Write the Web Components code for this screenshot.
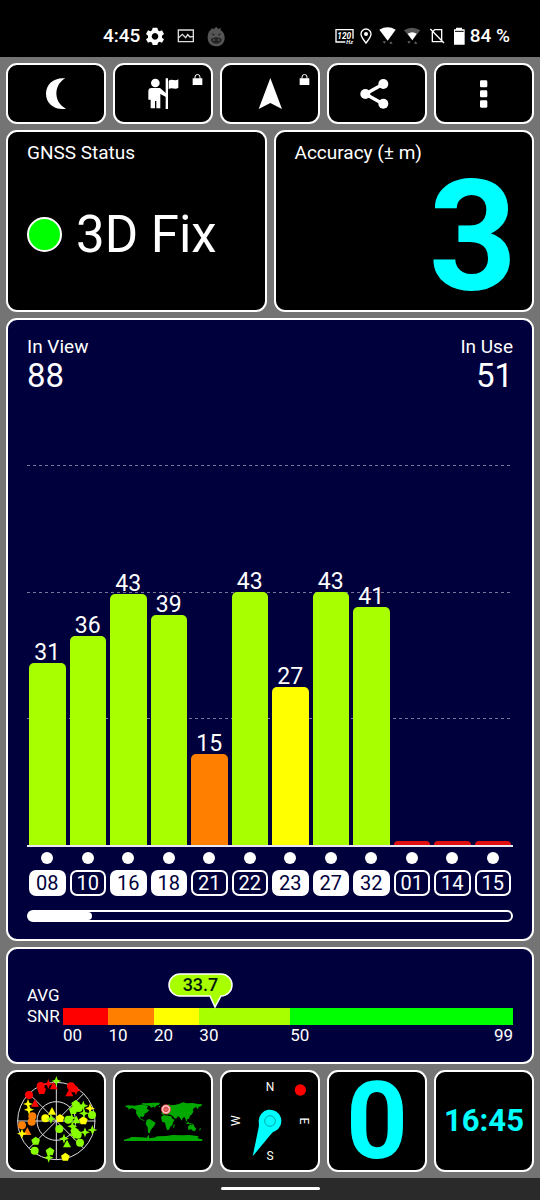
<!DOCTYPE html>
<html lang="en">
<head>
<meta charset="utf-8">
<meta name="viewport" content="width=device-width, initial-scale=1">
<title>GNSS Status</title>
<style>
html, body { margin: 0; }
body {
  --line: #fff; --panel: #00003c; --lime: #a8ff00; --orange: #ff8000; --cyan: #0ff;
  background: #747474; color: #fff; font-family: Roboto, "Liberation Sans", sans-serif;
}
</style>
</head>
<body>
<gps-app></gps-app>
<script>
const define = (name, html) => customElements.define(name, class extends HTMLElement {
  constructor() {
    super();
    this.attachShadow({ mode: 'open' });
  }
  connectedCallback() {
    this.shadowRoot.innerHTML = typeof html === 'function' ? html(this) : html;
  }
});

define('status-bar', `
<style>
:host { display: flex; justify-content: space-between; align-items: center; box-sizing: border-box;
  height: 57px; padding: 15px 30px 0 103px; background: #000; font-size: 19px; font-weight: 500; line-height: 24px; }
div { display: flex; align-items: center; }
.left { gap: 6px; }
.right { gap: 4px; }
svg { display: block; height: 24px; fill: #fff; }
</style>
<div class="left">
  <span>4:45</span>
  <svg width="18" viewBox="171 26 54 72"><path fill-rule="evenodd" d="M191 37h14l2 8 5 3 7-3 6 11-6 5v6l6 5-6 10-7-3-5 3-2 7h-14l-2-7-5-3-7 3-6-10 6-5v-6l-6-5 6-11 7 3 5-3zM198 53a10 10 0 1 0 .1 0z"/></svg>
  <svg width="31" viewBox="243 26 93 72"><path d="M268 44h45v35h-45zM268 68l12-11 10 10 6-9 7 7 10 -2" fill="none" stroke="#ddd" stroke-width="4"/></svg>
  <svg width="18" viewBox="354 26 54 72"><path d="M356 66c0-12 4-20 10-23l3-5 5 4 8-8 5 7 8-3v7c8 4 12 12 12 22 0 16-10 26-26 26s-25-11-25-27z" fill="#555"/><path d="M368 54l9 3-3 5zM396 54l-9 3 3 5zM366 70q16-9 32 0 0 14-16 15-16-1-16-15z" fill="#222"/><circle cx="375" cy="74" r="3" fill="#555"/><circle cx="389" cy="74" r="3" fill="#555"/></svg>
</div>
<div class="right">
  <svg width="20" viewBox="42 26 60 72"><path d="M73 80H45V43h51v27" fill="none" stroke="#fff" stroke-width="4"/><text x="49" y="70" font-size="25" font-style="italic" font-weight="700">120</text><text x="76" y="87" font-size="17" font-style="italic" font-weight="700">Hz</text></svg>
  <svg width="14" viewBox="114 26 42 72"><path d="M135 83c-8-11-15-18-15-27a15 15 0 0 1 30 0c0 9-7 16-15 27z" fill="none" stroke="#fff" stroke-width="4"/><circle cx="135" cy="56" r="6"/></svg>
  <svg width="21" viewBox="168 26 63 72"><path d="M175 43q25-14 49 0l-24 33z"/><path d="M185 78h10l-5 7zM205 85h10l-5-7z" fill="#666"/></svg>
  <svg width="20" viewBox="243 26 60 72"><path d="M249 45q24-16 49 0l-24 30z" fill="#555"/><path d="M260 55q14-9 27 0l-13 20z"/><path d="M259 78h10l-5 7zM279 85h10l-5-7z" fill="#666"/></svg>
  <svg width="23" viewBox="315 26 69 72"><path d="M341 43h21v36h-28V51zM328 41l41 42" fill="none" stroke="#fff" stroke-width="4"/></svg>
  <svg width="13" viewBox="396 26 39 72"><path d="M405 37h18v5h8v46h-32V42h6z"/><path d="M402 48h26" stroke="#000" stroke-width="3"/></svg>
  <span>84 %</span>
</div>`);

/* Tool buttons: each glyph is drawn in a 288 x 171 box that fills the button. */
const lock = x => `<path d="M${x - 15} 70h29v20h-29z"/><path d="M${x - 8} 71v-5a7 7 0 0 1 15 0v5" fill="none" stroke="#fff" stroke-width="3"/>`;
const tools = {
  night: ['24', '<path d="M196 70c-32-4-58 16-58 46s26 50 60 45c-38-18-38-72-2-91z"/>'],
  position: ['345', `<circle cx="466" cy="84" r="13"/><path d="M453 99h27l18 16v11l-17-9v43h-12v-22h-4v22h-13v-26h-7v-27q0-7 8-8z"/><path d="M497 70h7v92h-7zM506 77c10-8 18 4 29-4v25c-11 8-18-3-29 4z"/>${lock(593)}`],
  navigate: ['666', `<path d="M811 69l35 93-35-18-35 18z"/>${lock(914)}`],
  share: ['177', '<path d="M340 87l-54 30 54 30" fill="none" stroke="#fff" stroke-width="10"/><circle cx="340" cy="87" r="15"/><circle cx="286" cy="117" r="15"/><circle cx="340" cy="146" r="15"/>'],
  menu: ['498', '<rect x="630" y="76" width="22" height="21" rx="4"/><rect x="630" y="106" width="22" height="21" rx="4"/><rect x="630" y="136" width="22" height="22" rx="4"/>']
};
define('tool-button', el => `
<style>
:host { display: block; }
button { display: block; box-sizing: border-box; width: 100%; height: 61px; padding: 0; border: 2px solid var(--line);
  border-radius: 11px; background: #000; overflow: hidden; }
svg { display: block; width: 100%; height: 57px; fill: #fff; }
</style>
<button type="button" aria-label="${el.getAttribute('label')}"><svg viewBox="${tools[el.getAttribute('icon')][0]} 30 288 171">${tools[el.getAttribute('icon')][1]}</svg></button>`);

define('info-card', `
<style>
:host { display: flex; flex-direction: column; box-sizing: border-box; height: 182px; padding: 9px 19px 6px;
  border: 2px solid var(--line); border-radius: 11px; background: #000; }
h2 { margin: 0; font-size: 19px; line-height: 24px; font-weight: 400; }
div { flex: 1; display: flex; align-items: center; }
</style>
<h2><slot name="title"></slot></h2>
<div><slot></slot></div>`);

define('fix-status', `
<style>
:host { display: flex; align-items: center; gap: 14px; font-size: 51px; line-height: 60px; white-space: nowrap; }
i { box-sizing: border-box; width: 35px; height: 35px; border: 2px solid #fff; border-radius: 50%; background: #0f0; }
</style>
<i></i><slot></slot>`);

define('accuracy-value', `
<style>
:host { display: block; flex: 1; margin-right: -4px; padding-top: 6px; text-align: right;
  font-size: 154px; line-height: 133px; font-weight: 700; color: var(--cyan); }
</style>
<slot></slot>`);

define('satellite-bar', el => `
<style>
:host { display: flex; flex-direction: column; flex: 1; align-items: center; padding: 0 2px; box-sizing: border-box; min-width: 0; }
.plot { display: flex; flex-direction: column; justify-content: flex-end; flex: 1; width: 100%; }
.value { font-size: 23px; line-height: 20px; text-align: center; }
.bar { height: ${el.getAttribute('level')}%; background: ${el.getAttribute('color')}; border-radius: 5px 5px 0 0; }
.dot { width: 12px; height: 12px; margin: 7px 0 6px; border-radius: 50%; background: #fff; }
.id { box-sizing: border-box; width: 100%; border: 2px solid #fff; border-radius: 7px; font-size: 20px; line-height: 22px; text-align: center; }
:host([used]) .id { background: #fff; color: var(--panel); }
</style>
<div class="plot">${el.hasAttribute('value') ? `<div class="value">${el.getAttribute('value')}</div>` : ''}<div class="bar"></div></div>
<div class="dot"></div>
<div class="id"><slot></slot></div>`);

define('signal-chart', `
<style>
:host { display: flex; flex-direction: column; flex: 1; box-sizing: border-box; min-height: 560px; padding: 15px 19px 17px;
  border: 2px solid var(--line); border-radius: 11px; background: var(--panel); }
.stack { display: grid; flex: 1; }
.stack > * { grid-area: 1 / 1; }
header { display: flex; justify-content: space-between; align-self: start; font-size: 19px; line-height: 24px; }
header b { display: block; font-size: 33px; line-height: 34px; font-weight: 400; }
header div:last-child { text-align: right; }
.grid { display: grid; grid-template-rows: repeat(4, 1fr); margin: 5px 0 49px; border-bottom: 2px solid #e8e8f4; }
.grid i:not(:last-child) { background: repeating-linear-gradient(90deg, #77779a 0 3px, transparent 3px 6px) bottom / 100% 1px no-repeat; }
.bars { display: flex; margin-top: 4px; }
.scroll { box-sizing: border-box; height: 12px; margin-top: 14px; border: 2px solid #fff; border-radius: 6px; }
.scroll i { display: block; width: 13%; height: 8px; border-radius: 0 4px 4px 0; background: #fff; }
</style>
<div class="stack">
  <div class="grid"><i></i><i></i><i></i><i></i></div>
  <div class="bars"><slot></slot></div>
  <header><div>In View<b>88</b></div><div>In Use<b>51</b></div></header>
</div>
<div class="scroll"><i></i></div>`);

define('snr-gauge', `
<style>
:host { display: grid; grid-template-columns: 36px 1fr; box-sizing: border-box; padding: 24px 19px 17px;
  border: 2px solid var(--line); border-radius: 11px; background: var(--panel); font-size: 17px; }
.name { padding-top: 12px; line-height: 21px; }
.gauge { position: relative; padding-top: 35px; }
.bands, .scale { display: grid; grid-template-columns: 10fr 10fr 10fr 20fr 49fr; }
.bands i { height: 17px; }
.scale { line-height: 20px; }
.scale span:last-child { display: flex; justify-content: space-between; }
.tip { position: absolute; top: 0; left: 34%; width: 65px; height: 36px; margin-left: -48px; box-sizing: border-box;
  font-size: 18px; font-weight: 500; line-height: 24px; text-align: center; color: #001a10; }
.tip svg { position: absolute; inset: 0; }
.tip span { position: relative; }
</style>
<div class="name">AVG<br>SNR</div>
<div class="gauge">
  <div class="tip"><svg width="65" height="36" viewBox="0 0 65 36"><path d="M12 1h41a11 11 0 0 1 0 22l-6 11-5-11H12a11 11 0 0 1 0-22z" fill="#a8ff00" stroke="#fff" stroke-width="1.5"/></svg><span>33.7</span></div>
  <div class="bands"><i style="background:#f00"></i><i style="background:#ff8000"></i><i style="background:#ff0"></i><i style="background:#a8ff00"></i><i style="background:#0f0"></i></div>
  <div class="scale"><span>00</span><span>10</span><span>20</span><span>30</span><span><span>50</span><span>99</span></span></div>
</div>`);

define('dash-tile', `
<style>
:host { display: flex; align-items: center; justify-content: center; box-sizing: border-box; height: 102px;
  border: 2px solid var(--line); border-radius: 11px; background: #000; color: var(--cyan); font-weight: 700; line-height: 98px; }
:host([size="large"]) { font-size: 108px; }
:host([size="small"]) { font-size: 31px; }
</style>
<slot></slot>`);

const marks = {
  c: (x, y) => `<circle cx="${x}" cy="${y}" r="12"/>`,
  t: (x, y) => `<path d="M${x} ${y - 13}l12 23h-24z"/>`,
  p: (x, y) => `<path d="M${x} ${y - 13}l13 9-5 15h-16l-5-15z"/>`,
  s: (x, y) => `<path d="M${x} ${y - 15}l4 11 11 4-11 4-4 11-4-11-11-4 11-4z"/>`
};
const sky = {
  '#f00': 'c122,63 p125,76 s145,57 t161,63 c87,90 t105,115 c213,64 t208,84 s228,76 p221,71',
  '#ff8000': 'c97,154 c95,170 t82,200 c66,181',
  '#ff0': 's84,117 s87,134 s66,206 c136,160 t156,139 p180,160 s270,130 p250,167 p196,276',
  '#8f0': 's169,48 s153,162 c205,164 c178,192 p227,118 c236,129 s250,122 p220,136 s252,145 c276,150 t229,165 s215,159 s217,184 s277,195 s255,202 p224,199 c233,209 s192,221 t201,237 c240,233 p107,228 c104,257 p150,260 s146,278 s222,210'
};
define('sky-view', `
<style>:host { display: block; width: 100%; height: 100%; } svg { display: block; width: 100%; height: 100%; }</style>
<svg viewBox="24 21 288 294"><g fill="none" stroke="#ddd" stroke-width="3"><circle cx="169" cy="168" r="116"/><circle cx="169" cy="168" r="58"/><path d="M169 52v232M53 168h232M87 86l164 164M251 86L87 250"/></g>${
  Object.entries(sky).map(([c, list]) => `<g fill="${c}">${list.split(' ').map(m => marks[m[0]](...m.slice(1).split(',').map(Number))).join('')}</g>`).join('')
}</svg>`);

define('world-map', `
<style>:host { display: block; width: 100%; height: 100%; } svg { display: block; width: 100%; height: 100%; }</style>
<svg viewBox="21 21 288 294"><g fill="#00a800">
<path d="M50 123l12-2 18 1 16-3 14 1 10 3-4 8 8 5-6 6-8 4-2 8-5 2-7-2 2 7 8 3 5 4-4-1-11-5-7-9-5-9 1-8-7-5-8-1-10 4 2-4-6-3z"/>
<path d="M98 118l8-4 10 1 10-1 6 3 4 8-6 3-5-5-9-2zM122 115l13-2h21l-3 6-8 3-5 6-4-4-2-5z"/>
<path d="M116 164l9-2 8 5 10 6-4 9-6 7-5 7-3 9-5-2-1-16-6-9z"/>
<path d="M160 147l2-7 7 1 1-5-4-2 6-4 2-7 8-5 6 3 12-1 13-3 12-5 11 3 18-1 16 3 13 1-3 5-8 3-3 7-5-7-7 4-3 6 3 3-6 9-5 4-3 9-6 2 1 8-5-5-2-9-6 1-4 9-5-9-7-5-1 5-7 3-5-6-6-4-7-3-6 1-4-4-5 4z"/>
<path d="M159 156l8-6 12 2 10 1 5 9 6 2-5 8-2 9-6 4-4 9-6 1-4-12-2-10-9-3z"/>
<path d="M197 179l3-1-1 9-4 2zM228 168l7 7 5-4 6 4 8 1 4 3-13-1-10-2zM240 184l7-5 5 2 4-3 4 8 5 5-5 8-6-2-4-4-9 2zM276 188l3 4-6 6zM248 148l4-7 2 1-4 8zM162 128l3-3 2 6-4 1zM151 123l6 0-2 4z"/>
<path d="M48 224l18-5 3-3 34 1 13 1 6-8 2 3-1 7 15-2 10-4 26-1 20-3 30 1 20-1 28 4-3 6 14 3v5H48z"/>
</g><circle cx="174" cy="133" r="14" fill="#ffc0c0" stroke="#d33" stroke-width="2"/><circle cx="174" cy="133" r="7" fill="#d66" stroke="#c22" stroke-width="2"/></svg>`);

define('compass-dial', `
<style>:host { display: block; width: 100%; height: 100%; } svg { display: block; width: 100%; height: 100%; }
text { font-size: 36px; font-weight: 400; fill: #fff; text-anchor: middle; }</style>
<svg viewBox="21 21 288 294"><text x="165" y="78">N</text><text x="165" y="285">S</text>
<text transform="translate(76 167) rotate(-90)">W</text><text transform="translate(254 168) rotate(90)">E</text>
<circle cx="256" cy="75" r="17" fill="#f00"/><path d="M131 168a34 34 0 1 1 50 30q-8 2-12 8l-56 68 17-82q3-8 1-24z" fill="#0ff"/><circle cx="165" cy="168" r="16" fill="none" stroke="#087c80" stroke-width="2"/></svg>`);

define('nav-handle', `
<style>
:host { display: flex; justify-content: center; align-items: center; box-sizing: border-box; height: 22px; padding-bottom: 2px; background: #2a2a2a; }
i { width: 99px; height: 3px; border-radius: 2px; background: #fff; }
</style><i></i>`);

const satellites = [
  ['08', 31, 35.9, 1], ['10', 36, 41.3], ['16', 43, 49.6, 1], ['18', 39, 45.5, 1], ['21', 15, 18],
  ['22', 43, 50], ['23', 27, 31.2, 1], ['27', 43, 50.1, 1], ['32', 41, 47.1, 1], ['01', 0, 0.8], ['14', 0, 0.8], ['15', 0, 0.8]
];
const tone = v => v >= 30 ? '#a8ff00' : v >= 20 ? '#ff0' : v >= 10 ? '#ff8000' : '#e01010';
define('gps-app', `
<style>
:host { display: flex; flex-direction: column; min-height: 100vh; }
main { display: flex; flex-direction: column; flex: 1; gap: 6px; padding: 6px; }
nav, .tiles { display: grid; grid-template-columns: repeat(5, 1fr); gap: 7px; }
.info { display: grid; grid-template-columns: 1fr 1fr; gap: 7px; }
</style>
<status-bar></status-bar>
<main>
  <nav>
    <tool-button icon="night" label="Night mode"></tool-button>
    <tool-button icon="position" label="My position"></tool-button>
    <tool-button icon="navigate" label="Navigate"></tool-button>
    <tool-button icon="share" label="Share"></tool-button>
    <tool-button icon="menu" label="Menu"></tool-button>
  </nav>
  <div class="info">
    <info-card><span slot="title">GNSS Status</span><fix-status>3D Fix</fix-status></info-card>
    <info-card><span slot="title">Accuracy (± m)</span><accuracy-value>3</accuracy-value></info-card>
  </div>
  <signal-chart>${satellites.map(([id, v, level, used]) =>
    `<satellite-bar level="${level}" color="${tone(v)}"${v ? ` value="${v}"` : ''}${used ? ' used' : ''}>${id}</satellite-bar>`).join('')}</signal-chart>
  <snr-gauge></snr-gauge>
  <div class="tiles">
    <dash-tile><sky-view></sky-view></dash-tile>
    <dash-tile><world-map></world-map></dash-tile>
    <dash-tile><compass-dial></compass-dial></dash-tile>
    <dash-tile size="large">0</dash-tile>
    <dash-tile size="small">16:45</dash-tile>
  </div>
</main>
<nav-handle></nav-handle>`);
</script>
</body>
</html>
